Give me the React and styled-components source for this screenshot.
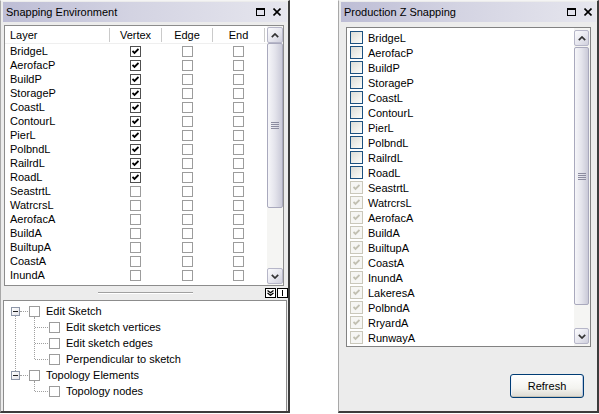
import React from 'react';
import styled, { createGlobalStyle } from 'styled-components';

const GlobalStyle = createGlobalStyle`
  html, body { margin: 0; padding: 0; background: #fff; }
  body {
    font-family: "Liberation Sans", Arial, sans-serif;
    font-size: 11px;
    color: #000;
  }
  * { box-sizing: border-box; }
`;

const snapLayers = [
  ['BridgeL', true], ['AerofacP', true], ['BuildP', true], ['StorageP', true],
  ['CoastL', true], ['ContourL', true], ['PierL', true], ['PolbndL', true],
  ['RailrdL', true], ['RoadL', true], ['SeastrtL', false], ['WatrcrsL', false],
  ['AerofacA', false], ['BuildA', false], ['BuiltupA', false], ['CoastA', false],
  ['InundA', false],
];

const zLayers = [
  'BridgeL', 'AerofacP', 'BuildP', 'StorageP', 'CoastL', 'ContourL', 'PierL',
  'PolbndL', 'RailrdL', 'RoadL', 'SeastrtL', 'WatrcrsL', 'AerofacA', 'BuildA',
  'BuiltupA', 'CoastA', 'InundA', 'LakeresA', 'PolbndA', 'RryardA', 'RunwayA',
];

const Page = styled.div`
  display: flex;
  align-items: flex-start;
  gap: 48px;
  width: 599px;
  height: 414px;
`;

const Panel = styled.div`
  width: ${p => p.$w}px;
  height: 413px;
  background: #ececec;
  border-top: 1px solid #f4f4f4;
  border-left: 1px solid #a8a8a8;
  border-right: 2px solid #3c3c3c;
  border-bottom: 2px solid #3c3c3c;
  padding: 1px 1px 0 2px;
  display: flex;
  flex-direction: column;
`;

const TitleBar = styled.div`
  height: 20px;
  flex-shrink: 0;
  display: flex;
  align-items: center;
  justify-content: space-between;
  padding: 0 ${p => p.$pr}px 0 3px;
  background: linear-gradient(to right, #bdbdd5 0%, #d3d3e2 45%, #e6e6ee 100%);
`;

const TitleText = styled.span`
  font-size: 11px;
  color: #000;
`;

const TitleIcons = styled.div`
  display: flex;
  align-items: center;
  gap: 8px;
`;

const MaxIcon = () => (
  <svg width="9" height="8" viewBox="0 0 9 8">
    <rect x="0.5" y="0.5" width="8" height="7" fill="none" stroke="#000" />
    <rect x="0" y="0" width="9" height="2" fill="#000" />
  </svg>
);

const CloseIcon = () => (
  <svg width="8" height="8" viewBox="0 0 8 8">
    <path d="M0.5 0.5 L7.5 7.5 M7.5 0.5 L0.5 7.5" stroke="#000" strokeWidth="1.6" />
  </svg>
);

/* ---------- shared checkboxes ---------- */

const ClassicBox = styled.span`
  width: 11px;
  height: 11px;
  flex-shrink: 0;
  display: inline-flex;
  align-items: center;
  justify-content: center;
  background: #fff;
  border: 1px solid ${p => (p.$checked ? '#505050' : '#9c9c9c')};
`;

const Check = ({ color = '#000' }) => (
  <svg width="7" height="7" viewBox="0 0 7 7">
    <path d="M0.5 3 L2.5 5 L6.5 1" fill="none" stroke={color} strokeWidth="1.8" />
  </svg>
);

const XpBox = styled.span`
  width: 13px;
  height: 13px;
  flex-shrink: 0;
  display: inline-flex;
  align-items: center;
  justify-content: center;
  border: 1px solid ${p => (p.$disabled ? '#cac8bb' : '#1c5180')};
  background: ${p => (p.$disabled
    ? '#f6f6f4'
    : 'linear-gradient(135deg, #dcdcd6 0%, #f0f0ec 60%, #fdfdfb 100%)')};
`;

/* ---------- scrollbar ---------- */

const ScrollBar = styled.div`
  width: 16px;
  flex-shrink: 0;
  display: flex;
  flex-direction: column;
  padding: ${p => p.$pad};
  background: #f5f5f3;
`;

const ScrollBtn = styled.div`
  height: 16px;
  flex-shrink: 0;
  display: flex;
  align-items: center;
  justify-content: center;
  border: 1px solid #b6b6c8;
  border-radius: 2px;
  background: linear-gradient(135deg, #fbfbfd 0%, #e6e6ee 55%, #cfcfdc 100%);
`;

const Track = styled.div`
  flex: 1;
  display: flex;
  flex-direction: column;
`;

const Thumb = styled.div`
  height: ${p => p.$h}px;
  margin-top: ${p => p.$top}px;
  border: 1px solid #a9a9bd;
  border-radius: 2px;
  background: linear-gradient(to right, #f6f6f9 0%, #e4e4ec 50%, #cacad8 100%);
  display: flex;
  align-items: center;
  justify-content: center;
`;

const Grip = () => (
  <svg width="8" height="7" viewBox="0 0 8 7">
    {[0.5, 2.5, 4.5, 6.5].map(y => (
      <line key={y} x1="0" x2="8" y1={y} y2={y} stroke="#8c8ca0" />
    ))}
  </svg>
);

const Chevron = ({ down }) => (
  <svg width="8" height="5" viewBox="0 0 8 5">
    <path
      d={down ? 'M0.8 0.8 L4 4 L7.2 0.8' : 'M0.8 4.2 L4 1 L7.2 4.2'}
      fill="none"
      stroke="#333"
      strokeWidth="1.7"
    />
  </svg>
);

const Scroller = ({ pad, thumbTop, thumbH }) => (
  <ScrollBar $pad={pad}>
    <ScrollBtn><Chevron /></ScrollBtn>
    <Track>
      <Thumb $top={thumbTop} $h={thumbH}><Grip /></Thumb>
    </Track>
    <ScrollBtn><Chevron down /></ScrollBtn>
  </ScrollBar>
);

/* ---------- snapping environment ---------- */

const ListBox = styled.div`
  height: 261px;
  margin: 3px 3px 0 1px;
  border: 1px solid #8c8c8c;
  background: #fff;
  display: flex;
  flex-shrink: 0;
`;

const Grid = styled.div`
  flex: 1;
  display: flex;
  flex-direction: column;
`;

const HeaderRow = styled.div`
  height: 18px;
  display: flex;
  align-items: center;
  border-bottom: 1px solid #efefef;
`;

const HeaderCell = styled.div`
  width: ${p => p.$w}px;
  height: 14px;
  line-height: 14px;
  flex-shrink: 0;
  text-align: ${p => (p.$left ? 'left' : 'center')};
  padding-left: ${p => (p.$left ? 5 : 0)}px;
  border-right: 1px solid #cacaca;
`;

const Row = styled.div`
  height: 14px;
  display: flex;
  align-items: center;
`;

const Cell = styled.div`
  width: ${p => p.$w}px;
  flex-shrink: 0;
  display: flex;
  justify-content: ${p => (p.$left ? 'flex-start' : 'center')};
  padding-left: ${p => (p.$left ? 5 : 0)}px;
  padding-right: ${p => (p.$left ? 0 : 1)}px;
  white-space: nowrap;
`;

const cols = [105, 52, 51, 52];

const Splitter = styled.div`
  height: 14px;
  flex-shrink: 0;
  display: grid;
  grid-template-columns: 1fr auto 1fr;
  align-items: center;
`;

const GripLine = styled.div`
  width: 95px;
  height: 2px;
  border-top: 1px solid #a0a0a0;
  border-bottom: 1px solid #fff;
`;

const SplitIcons = styled.div`
  justify-self: end;
  display: flex;
  gap: 1px;
  margin-right: -1px;
`;

const SplitBtn = styled.div`
  width: 11px;
  height: 10px;
  border: 1px solid #000;
  background: #fff;
  display: flex;
  align-items: center;
  justify-content: center;
`;

const TreeBox = styled.div`
  flex: 1;
  border: 1px solid #8c8c8c;
  border-bottom: none;
  background: #fff;
  padding-top: 2px;
`;

const TreeGroup = styled.div`
  position: relative;
  &::before {
    content: '';
    display: ${p => (p.$last ? 'none' : 'block')};
    position: absolute;
    left: 11px;
    top: 13px;
    bottom: -4px;
    border-left: 1px dotted #a0a0a0;
  }
`;

const Children = styled.div`
  position: relative;
  &::before {
    content: '';
    position: absolute;
    left: 30px;
    top: -2px;
    bottom: 8px;
    border-left: 1px dotted #a0a0a0;
  }
`;

const TreeRow = styled.div`
  height: 16px;
  display: flex;
  align-items: center;
  padding-left: ${p => p.$indent}px;
  white-space: nowrap;
`;

const Expander = styled.span`
  width: 9px;
  height: 9px;
  flex-shrink: 0;
  border: 1px solid #8d96a8;
  background: linear-gradient(135deg, #fff 0%, #e4e4ea 100%);
  display: inline-flex;
  align-items: center;
  justify-content: center;
  &::after {
    content: '';
    width: 5px;
    height: 1px;
    background: #1f1f1f;
  }
`;

const Connector = styled.span`
  width: ${p => p.$w}px;
  flex-shrink: 0;
  border-top: 1px dotted #a0a0a0;
  margin-right: 1px;
`;

const TreeLabel = styled.span`
  margin-left: 6px;
`;

const tree = [
  { label: 'Edit Sketch', children: ['Edit sketch vertices', 'Edit sketch edges', 'Perpendicular to sketch'] },
  { label: 'Topology Elements', children: ['Topology nodes'] },
];

const SnappingEnvironment = () => (
  <Panel $w={290}>
    <TitleBar $pr={6}>
      <TitleText>Snapping Environment</TitleText>
      <TitleIcons><MaxIcon /><CloseIcon /></TitleIcons>
    </TitleBar>
    <ListBox>
      <Grid>
        <HeaderRow>
          <HeaderCell $w={cols[0]} $left>Layer</HeaderCell>
          <HeaderCell $w={cols[1]}>Vertex</HeaderCell>
          <HeaderCell $w={cols[2]}>Edge</HeaderCell>
          <HeaderCell $w={cols[3]}>End</HeaderCell>
        </HeaderRow>
        {snapLayers.map(([name, vertex]) => (
          <Row key={name}>
            <Cell $w={cols[0]} $left>{name}</Cell>
            <Cell $w={cols[1]}>
              <ClassicBox $checked={vertex}>{vertex && <Check />}</ClassicBox>
            </Cell>
            <Cell $w={cols[2]}><ClassicBox /></Cell>
            <Cell $w={cols[3]}><ClassicBox /></Cell>
          </Row>
        ))}
      </Grid>
      <Scroller pad="1px 0 1px 0" thumbTop={0} thumbH={165} />
    </ListBox>
    <Splitter>
      <span />
      <GripLine />
      <SplitIcons>
        <SplitBtn>
          <svg width="7" height="6" viewBox="0 0 7 6">
            <path d="M0.5 0.5 L3.5 2.8 L6.5 0.5 M0.5 3 L3.5 5.3 L6.5 3" fill="none" stroke="#000" strokeWidth="1.3" />
          </svg>
        </SplitBtn>
        <SplitBtn>
          <svg width="3" height="6" viewBox="0 0 3 6">
            <line x1="1.5" x2="1.5" y1="0" y2="6" stroke="#000" strokeWidth="1" />
          </svg>
        </SplitBtn>
      </SplitIcons>
    </Splitter>
    <TreeBox>
      {tree.map((node, i) => (
        <TreeGroup key={node.label} $last={i === tree.length - 1}>
          <TreeRow $indent={7}>
            <Expander />
            <Connector $w={8} />
            <ClassicBox />
            <TreeLabel>{node.label}</TreeLabel>
          </TreeRow>
          <Children>
            {node.children.map(child => (
              <TreeRow key={child} $indent={31}>
                <Connector $w={13} />
                <ClassicBox />
                <TreeLabel>{child}</TreeLabel>
              </TreeRow>
            ))}
          </Children>
        </TreeGroup>
      ))}
    </TreeBox>
  </Panel>
);

/* ---------- production z snapping ---------- */

const ZList = styled.div`
  height: 320px;
  margin: 5px 5px 0 5px;
  border: 1px solid #828282;
  background: #fff;
  display: flex;
  flex-shrink: 0;
`;

const ZItems = styled.div`
  flex: 1;
  padding: 2px 0 0 3px;
`;

const ZRow = styled.div`
  height: 15px;
  display: flex;
  align-items: center;
  gap: 5px;
`;

const Footer = styled.div`
  display: flex;
  justify-content: flex-end;
  padding: 27px 12px 0 0;
`;

const Button = styled.button`
  width: 74px;
  height: 24px;
  font-family: "Liberation Sans", Arial, sans-serif;
  font-size: 11px;
  color: #000;
  border: 1px solid #003c74;
  border-radius: 3px;
  background: linear-gradient(to bottom, #ffffff 0%, #f3f3ef 60%, #dcdad2 100%);
  box-shadow: inset 0 -1px 0 #c6c3b6, inset 1px 0 0 #eef2fb, inset -1px 0 0 #bcc8e2;
  padding: 0;
`;

const ProductionZSnapping = () => (
  <Panel $w={261}>
    <TitleBar $pr={4}>
      <TitleText>Production Z Snapping</TitleText>
      <TitleIcons><MaxIcon /><CloseIcon /></TitleIcons>
    </TitleBar>
    <ZList>
      <ZItems>
        {zLayers.map((name, i) => {
          const disabled = i >= 10;
          return (
            <ZRow key={name}>
              <XpBox $disabled={disabled}>{disabled && <Check color="#c2c0b2" />}</XpBox>
              <span>{name}</span>
            </ZRow>
          );
        })}
      </ZItems>
      <Scroller pad="2px 1px 2px 0" thumbTop={1} thumbH={258} />
    </ZList>
    <Footer>
      <Button>Refresh</Button>
    </Footer>
  </Panel>
);

const App = () => (
  <>
    <GlobalStyle />
    <Page>
      <SnappingEnvironment />
      <ProductionZSnapping />
    </Page>
  </>
);

export default App;
